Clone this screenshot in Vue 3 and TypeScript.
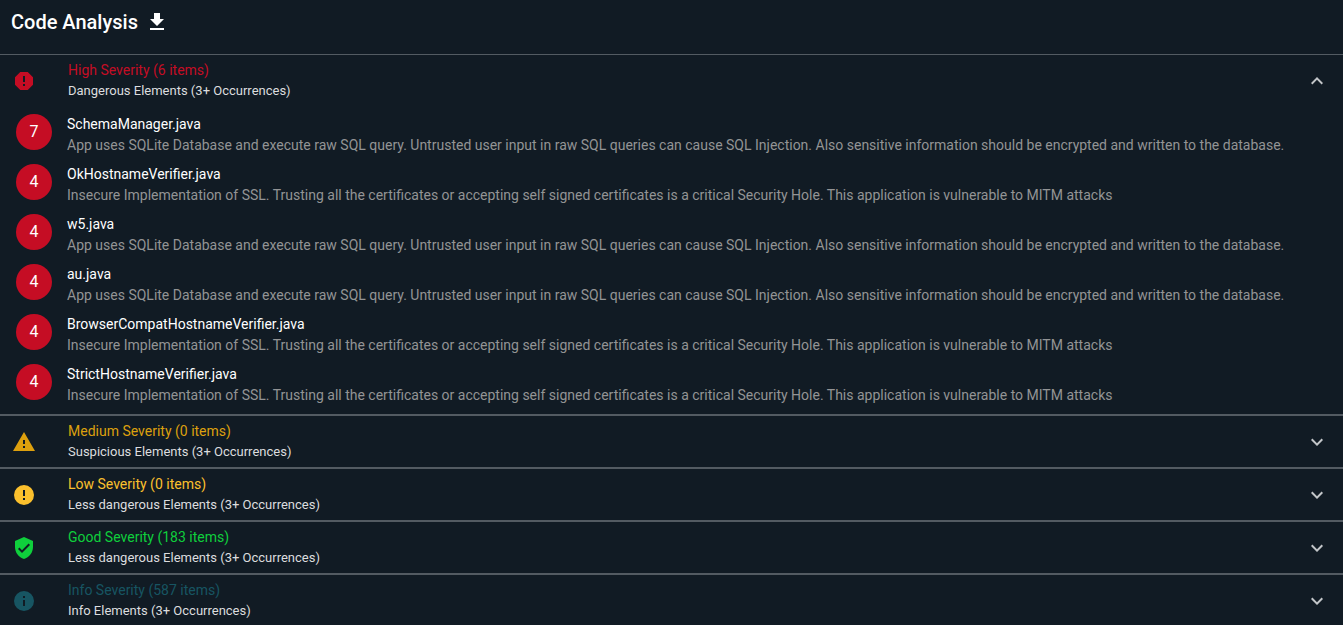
<script setup lang="ts">
import { ref } from 'vue'

interface Finding {
  count: number
  file: string
  text: string
}

interface Severity {
  id: string
  title: string
  subtitle: string
  icon: string
  findings: Finding[]
}

const SQL =
  'App uses SQLite Database and execute raw SQL query. Untrusted user input in raw SQL queries can cause SQL Injection. Also sensitive information should be encrypted and written to the database.'
const SSL =
  'Insecure Implementation of SSL. Trusting all the certificates or accepting self signed certificates is a critical Security Hole. This application is vulnerable to MITM attacks'

const groups: Severity[] = [
  {
    id: 'high',
    title: 'High Severity (6 items)',
    subtitle: 'Dangerous Elements (3+ Occurrences)',
    icon: 'M13 13H11V7H13M11 15H13V17H11M15.73 3H8.27L3 8.27V15.73L8.27 21H15.73L21 15.73V8.27L15.73 3Z',
    findings: [
      { count: 7, file: 'SchemaManager.java', text: SQL },
      { count: 4, file: 'OkHostnameVerifier.java', text: SSL },
      { count: 4, file: 'w5.java', text: SQL },
      { count: 4, file: 'au.java', text: SQL },
      { count: 4, file: 'BrowserCompatHostnameVerifier.java', text: SSL },
      { count: 4, file: 'StrictHostnameVerifier.java', text: SSL },
    ],
  },
  {
    id: 'medium',
    title: 'Medium Severity (0 items)',
    subtitle: 'Suspicious Elements (3+ Occurrences)',
    icon: 'M13 14H11V10H13M13 18H11V16H13M1 21H23L12 2L1 21Z',
    findings: [],
  },
  {
    id: 'low',
    title: 'Low Severity (0 items)',
    subtitle: 'Less dangerous Elements (3+ Occurrences)',
    icon: 'M13 13H11V7H13M13 17H11V15H13M12 2A10 10 0 0 0 2 12A10 10 0 0 0 12 22A10 10 0 0 0 22 12A10 10 0 0 0 12 2Z',
    findings: [],
  },
  {
    id: 'good',
    title: 'Good Severity (183 items)',
    subtitle: 'Less dangerous Elements (3+ Occurrences)',
    icon: 'M10 17L6 13L7.41 11.59L10 14.17L16.59 7.58L18 9M12 1L3 5V11C3 16.55 6.84 21.74 12 23C17.16 21.74 21 16.55 21 11V5L12 1Z',
    findings: [],
  },
  {
    id: 'info',
    title: 'Info Severity (587 items)',
    subtitle: 'Info Elements (3+ Occurrences)',
    icon: 'M13 9H11V7H13M13 17H11V11H13M12 2A10 10 0 0 0 2 12A10 10 0 0 0 12 22A10 10 0 0 0 22 12A10 10 0 0 0 12 2Z',
    findings: [],
  },
]

const openId = ref<string>('high')

function toggle(id: string): void {
  openId.value = openId.value === id ? '' : id
}
</script>

<template>
  <main class="page">
    <header class="heading">
      <h1>Code Analysis</h1>
      <button class="download" type="button" aria-label="Download">
        <svg viewBox="0 0 24 24" aria-hidden="true"><path d="M5 20H19V18H5M19 9H15V3H9V9H5L12 16L19 9Z" /></svg>
      </button>
    </header>

    <section v-for="group in groups" :key="group.id" class="group" :class="group.id">
      <button
        class="summary"
        type="button"
        :aria-expanded="openId === group.id"
        @click="toggle(group.id)"
      >
        <svg class="level" viewBox="0 0 24 24" aria-hidden="true"><path :d="group.icon" /></svg>
        <span class="labels">
          <span class="title">{{ group.title }}</span>
          <span class="subtitle">{{ group.subtitle }}</span>
        </span>
        <svg class="chevron" viewBox="0 0 24 24" aria-hidden="true">
          <path v-if="openId === group.id" d="M7.41 15.41L12 10.83L16.59 15.41L18 14L12 8L6 14Z" />
          <path v-else d="M7.41 8.58L12 13.17L16.59 8.58L18 10L12 16L6 10Z" />
        </svg>
      </button>

      <ul v-if="openId === group.id && group.findings.length" class="findings">
        <li v-for="finding in group.findings" :key="finding.file" class="finding">
          <span class="count">{{ finding.count }}</span>
          <div class="detail">
            <h2>{{ finding.file }}</h2>
            <p>{{ finding.text }}</p>
          </div>
        </li>
      </ul>
    </section>
  </main>
</template>

<style>
body {
  background: #111b24;
}
</style>

<style scoped>
.page {
  font-family: Roboto, "Liberation Sans", sans-serif;
  background: #111b24;
  color: #fff;
}

.heading {
  display: flex;
  align-items: center;
  gap: 7px;
  padding: 8px 11px 18px;
}

h1 {
  margin: 0;
  font-size: 20px;
  line-height: 28px;
  font-weight: 500;
}

button {
  border: 0;
  background: none;
  color: inherit;
  font: inherit;
  padding: 0;
  cursor: pointer;
}

svg {
  display: block;
  width: 24px;
  height: 24px;
  fill: currentColor;
}

.group {
  border-top: 2px solid #535b62;
}

.heading + .group {
  border-top-width: 1px;
}

.summary {
  display: flex;
  align-items: center;
  width: 100%;
  padding: 5px 14px 5px 12px;
  text-align: left;
}

.labels {
  flex: 1;
  margin-left: 32px;
}

.title,
.subtitle {
  display: block;
}

.title {
  font-size: 14px;
  line-height: 21px;
}

.subtitle {
  font-size: 13px;
  line-height: 20px;
  color: #dcdddf;
}

.chevron {
  color: #c3c6c9;
}

.high .title,
.high .level {
  color: #c50d24;
}

.medium .title,
.medium .level {
  color: #dda00e;
}

.low .title,
.low .level {
  color: #fbc02d;
}

.good .title,
.good .level {
  color: #0fcf3c;
}

.info .title,
.info .level {
  color: #175562;
}

.findings {
  list-style: none;
  margin: 0;
  padding: 1px 16px 7px;
}

.finding {
  display: flex;
  align-items: center;
  gap: 15px;
  min-height: 50px;
}

.count {
  flex: none;
  width: 36px;
  height: 36px;
  border-radius: 50%;
  background: #c50d24;
  font-size: 16px;
  line-height: 36px;
  text-align: center;
}

.detail {
  padding-top: 6px;
}

h2,
p {
  margin: 0;
  font-size: 14px;
  line-height: 21px;
}

h2 {
  font-weight: 400;
}

p {
  color: #939495;
}
</style>
